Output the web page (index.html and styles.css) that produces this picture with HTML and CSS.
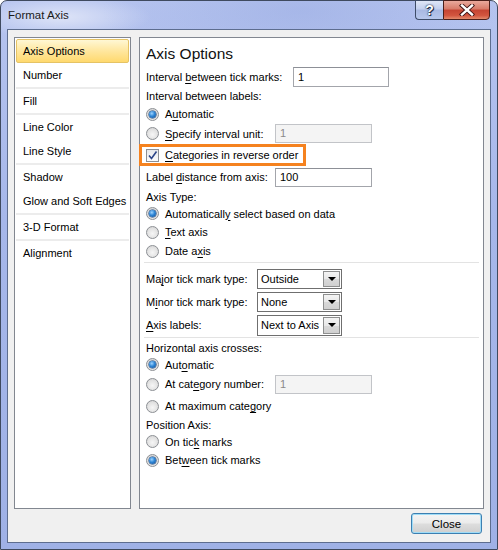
FILE: index.html
```html
<!DOCTYPE html>
<html>
<head>
<meta charset="utf-8">
<link rel="stylesheet" href="styles.css">
</head>
<body>
<div class="window">
  <div class="titlebar">
    <span class="title">Format Axis</span>
    <div class="caption-btns">
      <div class="cap-help">?</div>
      <div class="cap-close">
        <svg width="16" height="12" viewBox="0 0 16 12"><path d="M3 1.5 L13 10.5 M13 1.5 L3 10.5" stroke="#3a1010" stroke-width="4.2" stroke-linecap="square"/><path d="M3 1.5 L13 10.5 M13 1.5 L3 10.5" stroke="#ffffff" stroke-width="2.4" stroke-linecap="square"/></svg>
      </div>
    </div>
  </div>
  <div class="client">
    <div class="panes">
      <ul class="nav">
        <li class="item selected">Axis Options</li>
        <li class="item">Number</li>
        <li class="sep"></li>
        <li class="item">Fill</li>
        <li class="sep"></li>
        <li class="item">Line Color</li>
        <li class="item">Line Style</li>
        <li class="sep"></li>
        <li class="item">Shadow</li>
        <li class="item">Glow and Soft Edges</li>
        <li class="sep"></li>
        <li class="item">3-D Format</li>
        <li class="sep"></li>
        <li class="item">Alignment</li>
      </ul>
      <div class="content">
        <div class="heading">Axis Options</div>
        <div class="row h20">
          <span class="lbl w147">Interval <u>b</u>etween tick marks:</span>
          <span class="textbox w96">1</span>
        </div>
        <div class="row h18"><span>Interval between labels:</span></div>
        <div class="row h18"><span class="radio on"></span><span>A<u>u</u>tomatic</span></div>
        <div class="row h21">
          <span class="radio"></span><span class="lbl w110"><u>S</u>pecify interval unit:</span>
          <span class="textbox disabled w97">1</span>
        </div>
        <div class="row highlight">
          <span class="check"><svg width="11" height="11" viewBox="0 0 11 11"><path d="M2 5.5 L4.5 8.5 L9.5 1.5" fill="none" stroke="#2b4488" stroke-width="1.6"/></svg></span>
          <span><u>C</u>ategories in reverse order</span>
        </div>
        <div class="row h22">
          <span class="lbl w129">Label <u>d</u>istance from axis:</span>
          <span class="textbox w97">100</span>
        </div>
        <div class="row h17"><span>Axis Type:</span></div>
        <div class="row h17"><span class="radio on"></span><span>Automaticall<u>y</u> select based on data</span></div>
        <div class="row h20"><span class="radio"></span><span><u>T</u>ext axis</span></div>
        <div class="row h18"><span class="radio"></span><span>Date a<u>x</u>is</span></div>
        <div class="divider first"></div>
        <div class="row h22">
          <span class="lbl w111">Ma<u>j</u>or tick mark type:</span>
          <span class="combo"><span class="combo-text">Outside</span><span class="combo-btn"><span class="arrow"></span></span></span>
        </div>
        <div class="row h23">
          <span class="lbl w111">M<u>i</u>nor tick mark type:</span>
          <span class="combo"><span class="combo-text">None</span><span class="combo-btn"><span class="arrow"></span></span></span>
        </div>
        <div class="row h24">
          <span class="lbl w111"><u>A</u>xis labels:</span>
          <span class="combo tall"><span class="combo-text">Next to Axis</span><span class="combo-btn"><span class="arrow"></span></span></span>
        </div>
        <div class="divider"></div>
        <div class="row h19"><span>Horizontal axis crosses:</span></div>
        <div class="row h15"><span class="radio on"></span><span>Aut<u>o</u>matic</span></div>
        <div class="row h24">
          <span class="radio"></span><span class="lbl w110">At cat<u>e</u>gory number:</span>
          <span class="textbox disabled w97">1</span>
        </div>
        <div class="row h20"><span class="radio"></span><span>At maximum cate<u>g</u>ory</span></div>
        <div class="row h18"><span>Position Axis:</span></div>
        <div class="row h15"><span class="radio"></span><span>On tic<u>k</u> marks</span></div>
        <div class="row h22"><span class="radio on"></span><span>Bet<u>w</u>een tick marks</span></div>
      </div>
    </div>
    <div class="footer">
      <button class="btn-close">Close</button>
    </div>
  </div>
</div>
</body>
</html>
```
FILE: styles.css
```css
* { box-sizing: border-box; }
html, body { margin: 0; padding: 0; }
body {
  width: 498px;
  height: 550px;
  font-family: "Liberation Sans", Arial, sans-serif;
  font-size: 11px;
  color: #000;
  background: #ffffff;
}
.window {
  width: 498px;
  height: 550px;
  border: 1px solid #3f4a5f;
  border-radius: 7px 7px 0 0;
  background:
    radial-gradient(ellipse 90px 22px at 60px 16px, rgba(255,255,255,0.55), rgba(255,255,255,0) 100%),
    radial-gradient(ellipse 200px 60px at 300px 10px, rgba(140,160,220,0.35), rgba(140,160,220,0) 100%),
    linear-gradient(to bottom, #b6c4ef 0%, #a6b7ea 40%, #9fb1e6 100%);
  display: flex;
  flex-direction: column;
  padding: 0 6px 6px 6px;
}
.titlebar {
  height: 28px;
  display: flex;
  align-items: flex-start;
  justify-content: space-between;
}
.title {
  margin-top: 8px;
  margin-left: 1px;
  font-size: 11.5px;
  color: #1a1a1a;
}
.caption-btns {
  display: flex;
  margin-top: -1px;
  margin-right: 1px;
}
.cap-help {
  width: 28px;
  height: 20px;
  border: 1px solid #3e4c68;
  border-right: none;
  border-radius: 0 0 0 4px;
  background: linear-gradient(to bottom, #dfe6f7 0%, #c2cfee 45%, #a9b9e2 50%, #b7c7ec 100%);
  color: #fff;
  font-weight: bold;
  font-size: 14px;
  line-height: 18px;
  text-align: center;
  text-shadow: 0 0 2px #1c2840, 0 0 1px #1c2840, 1px 1px 0 #2a3550;
}
.cap-close {
  width: 47px;
  height: 20px;
  border: 1px solid #4a1f1a;
  border-radius: 0 0 4px 0;
  background: linear-gradient(to bottom, #e9a99c 0%, #d77a68 45%, #c54432 50%, #d2553f 80%, #e38a6c 100%);
  display: flex;
  align-items: center;
  justify-content: center;
}
.client {
  flex: 1;
  border: 1px solid #5d6d8f;
  background: #f0f0f0;
  display: flex;
  flex-direction: column;
  padding: 7px 6px 0 6px;
}
.panes {
  display: flex;
  gap: 8px;
  height: 472px;
}
.nav {
  list-style: none;
  margin: 0;
  padding: 1px;
  width: 117px;
  border: 1px solid #828790;
  background: #fff;
}
.item {
  height: 24px;
  line-height: 24px;
  padding-left: 7px;
  white-space: nowrap;
}
.item.selected {
  border: 1px solid #e5c365;
  border-radius: 2px;
  padding-left: 6px;
  line-height: 22px;
  background: linear-gradient(to bottom, #fff7d4 0%, #ffe8a3 45%, #ffd96e 100%);
}
.sep {
  height: 2px;
  background: #ececec;
}
.content {
  width: 345px;
  border: 1px solid #828790;
  background: #fff;
  padding: 0 6px;
  display: flex;
  flex-direction: column;
}
.heading {
  height: 29px;
  line-height: 31px;
  font-size: 15.5px;
  color: #111;
}
.row {
  display: flex;
  align-items: center;
  white-space: nowrap;
}
.h15 { height: 15px; }
.h17 { height: 17px; }
.h18 { height: 18px; }
.h19 { height: 19px; }
.h20 { height: 20px; }
.h21 { height: 21px; }
.h22 { height: 22px; }
.h23 { height: 23px; }
.h24 { height: 24px; }
.lbl { display: inline-block; flex: none; }
.w147 { width: 147px; }
.w129 { width: 129px; }
.w111 { width: 111px; }
.w110 { width: 110px; }
.textbox {
  height: 20px;
  line-height: 18px;
  border: 1px solid #a3a5ab;
  border-top-color: #8d9097;
  padding-left: 4px;
  background: #fff;
  flex: none;
}
.textbox.w96 { width: 96px; }
.textbox.w97 { width: 97px; height: 19px; line-height: 17px; }
.textbox.disabled {
  background: #f4f4f4;
  color: #8a8a8a;
  border-color: #c2c4c8;
}
.radio {
  width: 13px;
  height: 13px;
  border-radius: 50%;
  border: 1px solid #8c8f94;
  background: radial-gradient(circle at 50% 60%, #f6f6f6 0%, #e3e3e3 55%, #cfcfcf 100%);
  margin-right: 6px;
  position: relative;
  flex: none;
}
.radio.on::after {
  content: "";
  position: absolute;
  left: 2px;
  top: 2px;
  width: 7px;
  height: 7px;
  border-radius: 50%;
  background: radial-gradient(circle at 40% 35%, #9fd4ff 0%, #2e86d6 45%, #124a8e 100%);
  box-shadow: 0 0 0 0.5px #0e3870;
}
.highlight {
  height: 22px;
  margin-left: -7px;
  align-self: flex-start;
  border: 3px solid #f5821f;
  padding: 0 5px 0 4px;
}
.check {
  width: 13px;
  height: 13px;
  border: 1px solid #8c8f94;
  background: linear-gradient(to bottom, #e6e8ec, #fbfbfc);
  margin-right: 6px;
  display: flex;
  align-items: center;
  justify-content: center;
  flex: none;
}
.divider {
  height: 0;
  border-top: 1px solid #e3e3e3;
  margin: 2px -2px 5px -2px;
}
.divider:not(.first) { margin: 0 -2px 0 -2px; }
.combo {
  width: 85px;
  height: 20px;
  border: 1px solid #6f6f6f;
  display: flex;
  align-items: center;
  background: #fff;
  padding: 1px;
  flex: none;
}
.combo.tall { height: 21px; }
.combo-text {
  flex: 1;
  padding-left: 2px;
  overflow: hidden;
}
.combo-btn {
  width: 17px;
  height: 100%;
  border: 1px solid #8e8f8f;
  background: linear-gradient(to bottom, #f4f4f4 0%, #e8e8e8 50%, #d9d9d9 51%, #d0d0d0 100%);
  display: flex;
  align-items: center;
  justify-content: center;
  flex: none;
}
.arrow {
  width: 0;
  height: 0;
  border-left: 4px solid transparent;
  border-right: 4px solid transparent;
  border-top: 4px solid #000;
}
u { text-decoration: underline; text-underline-offset: 2px; }
.footer {
  display: flex;
  justify-content: flex-end;
  padding: 4px 2px 0 0;
}
.btn-close {
  width: 71px;
  height: 21px;
  font-family: inherit;
  font-size: 11.5px;
  color: #000;
  border: 1px solid #3c7fb1;
  border-radius: 3px;
  background: linear-gradient(to bottom, #f4f4f4 0%, #ebebeb 48%, #dddddd 52%, #cfcfcf 100%);
  box-shadow: inset 0 0 0 1px #9fdcf7;
  padding: 0;
}
```
